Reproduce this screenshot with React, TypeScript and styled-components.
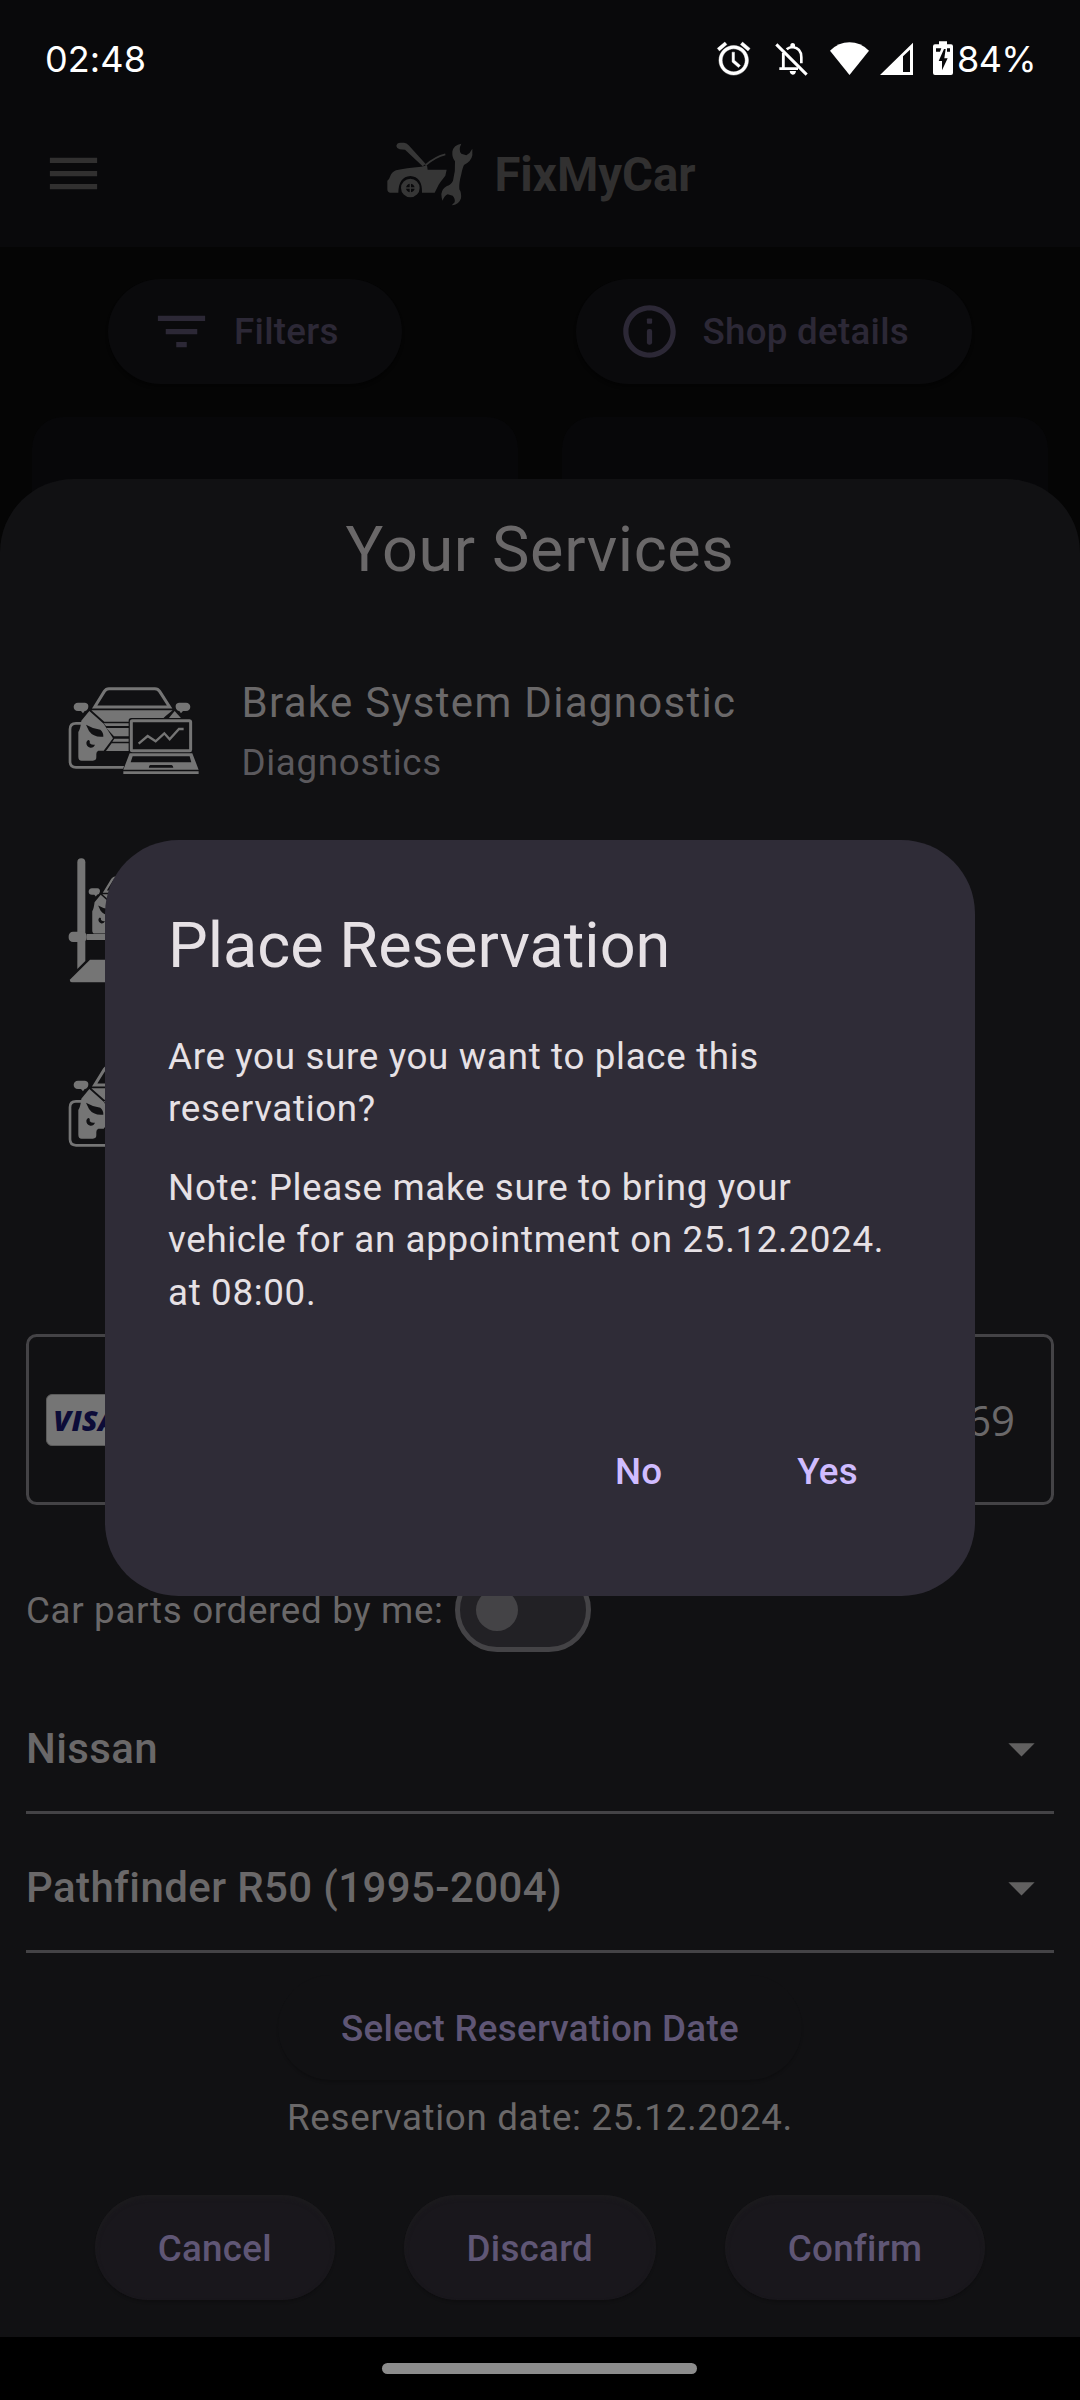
import React from "react";
import styled, { createGlobalStyle } from "styled-components";

const GlobalStyle = createGlobalStyle`
  html, body { margin: 0; padding: 0; background: #000; }
  * { box-sizing: border-box; }
`;

const c = {
  page: "#050505",
  bar: "#09090b",
  card: "#070709",
  chip: "#0a0a0c",
  dimText: "#313030",
  dimLogo: "#363636",
  dimPrimary: "#2c2836",
  sheet: "#111113",
  text: "#6a6869",
  subText: "#5b595d",
  icon: "#757575",
  line: "#444346",
  primary: "#5f5675",
  tonal: "#19171c",
  dialog: "#2f2c37",
  dialogText: "#e6e1e5",
  accent: "#d0bcff",
};

const Screen = styled.div`
  position: relative;
  width: 1080px;
  height: 2400px;
  overflow: hidden;
  display: flex;
  flex-direction: column;
  background: ${c.page};
  font-family: Roboto, "Liberation Sans", sans-serif;
`;

const StatusBar = styled.header`
  height: 106px;
  padding: 12px 45px 0 45px;
  display: flex;
  align-items: center;
  justify-content: space-between;
  background: ${c.bar};
  color: #fff;
  font: 400 36px/50px Inter, "Open Sans", sans-serif;
`;

const Clock = styled.span`
  letter-spacing: 0.1px;
`;

const StatusIcons = styled.div`
  display: flex;
  align-items: center;
  svg { display: block; }
`;

const Gap = styled.span<{ $w: number }>`
  width: ${(p) => p.$w}px;
`;

const Percent = styled.span`
  width: 78px;
  letter-spacing: -0.6px;
  white-space: nowrap;
`;

const AppBar = styled.div`
  height: 141px;
  display: grid;
  grid-template-columns: 105px 1fr 105px;
  align-items: center;
  padding: 0 0 6px;
  background: ${c.bar};
`;

const MenuButton = styled.div`
  padding-left: 42px;
  display: flex;
  svg { display: block; }
`;

const Brand = styled.div`
  display: flex;
  align-items: center;
  justify-content: center;
  gap: 21px;
  padding-left: 3px;
  color: ${c.dimText};
  font-size: 47.25px;
  font-weight: 700;
  line-height: 60px;
  svg { display: block; }
  span { padding-top: 2px; }
`;

const ChipRow = styled.div`
  display: flex;
  padding: 31.5px 108px 0 108px;
  justify-content: space-between;
`;

const Chip = styled.div`
  height: 105px;
  border-radius: 53px;
  display: flex;
  align-items: center;
  gap: 21px;
  padding: 0 63px 0 42px;
  background: ${c.chip};
  box-shadow: 0 3px 3px rgba(0, 0, 0, 0.4);
  color: ${c.dimPrimary};
  font-size: 36.75px;
  font-weight: 500;
  letter-spacing: 0.26px;
`;

const CardRow = styled.div`
  display: flex;
  gap: 44px;
  padding: 33px 32px 0;
`;

const Card = styled.div`
  flex: 1;
  height: 260px;
  border-radius: 31px;
  background: ${c.card};
`;

const Sheet = styled.section`
  position: absolute;
  left: 0;
  right: 0;
  top: 478.5px;
  height: 1858.5px;
  padding-top: 29px;
  display: flex;
  flex-direction: column;
  border-radius: 73.5px 73.5px 0 0;
  background: ${c.sheet};
  color: ${c.text};
`;

const SheetTitle = styled.h1`
  margin: 0 0 45px;
  text-align: center;
  font-size: 63px;
  font-weight: 400;
  line-height: 84px;
  letter-spacing: 0.62px;
`;

const ServiceRow = styled.div`
  height: 189px;
  padding-left: 66.5px;
  display: flex;
  align-items: center;
  gap: 41.7px;
  svg { display: block; flex: none; }
`;

const ServiceText = styled.div`
  display: flex;
  flex-direction: column;
  gap: 3px;
  padding-bottom: 2px;
`;

const ServiceName = styled.div`
  font-size: 42px;
  line-height: 63px;
  letter-spacing: 1.31px;
`;

const ServiceKind = styled.div`
  font-size: 36.75px;
  line-height: 52.5px;
  letter-spacing: 0.66px;
  color: ${c.subText};
`;

const CardField = styled.div`
  margin: 130.5px 26px 0;
  height: 171px;
  border: 3px solid ${c.line};
  border-radius: 10.5px;
  display: flex;
  align-items: center;
  justify-content: space-between;
  padding: 0 36px 0 17px;
  font: 400 42px/60px "Open Sans", "Noto Sans", sans-serif;
`;

const VisaBadge = styled.div`
  width: 79px;
  height: 52px;
  border-radius: 6px;
  border: 1px solid #5a5a5a;
  background: ${c.icon};
  color: #0c0c38;
  display: flex;
  align-items: center;
  justify-content: center;
  font: italic 800 29px/30px "Open Sans", sans-serif;
  letter-spacing: 0.2px;
`;

const SwitchRow = styled.div`
  margin: 63px 26px 0;
  height: 84px;
  display: flex;
  align-items: center;
  gap: 11px;
  font-size: 36.75px;
  letter-spacing: 0.66px;
  white-space: nowrap;
`;

const Track = styled.div`
  width: 136.5px;
  height: 84px;
  border: 5.25px solid ${c.line};
  border-radius: 42px;
  background: #222125;
  display: flex;
  align-items: center;
  padding-left: 16px;
`;

const Thumb = styled.div`
  width: 42px;
  height: 42px;
  border-radius: 50%;
  background: ${c.line};
`;

const Dropdown = styled.div<{ $top: number }>`
  margin: ${(p) => p.$top}px 26px 0;
  height: 97px;
  padding: 0 1px 31px 0;
  border-bottom: 3px solid ${c.line};
  display: flex;
  align-items: center;
  justify-content: space-between;
  font-size: 42px;
  font-weight: 500;
  letter-spacing: 0.39px;
  line-height: 60px;
  svg { display: block; }
`;

const PickDate = styled.div`
  align-self: center;
  margin-top: 22px;
  height: 105px;
  padding: 2px 63px 0;
  border-radius: 53px;
  display: flex;
  align-items: center;
  background: ${c.sheet};
  box-shadow: 0 3px 3px -1px rgba(0, 0, 0, 0.2);
  color: ${c.primary};
  font-size: 36.75px;
  font-weight: 500;
  letter-spacing: 0.26px;
`;

const DateLine = styled.div`
  margin-top: 12px;
  text-align: center;
  font-size: 36.75px;
  line-height: 52.5px;
  letter-spacing: 0.66px;
`;

const ButtonRow = styled.div`
  margin: 50px 26px 0;
  display: flex;
  justify-content: space-evenly;
`;

const TonalButton = styled.div`
  height: 105px;
  padding: 2px 63px 0;
  border-radius: 53px;
  display: flex;
  align-items: center;
  background: ${c.tonal};
  box-shadow: 0 3px 3px -1px rgba(0, 0, 0, 0.2), inset 0 3px 4px rgba(30, 30, 30, 0.6);
  color: ${c.primary};
  font-size: 36.75px;
  font-weight: 500;
  letter-spacing: 0.26px;
`;

const NavBar = styled.footer`
  margin-top: auto;
  height: 63px;
  display: flex;
  justify-content: center;
  align-items: center;
  background: #000;
  padding-right: 1px;
`;

const HomeHandle = styled.div`
  width: 315px;
  height: 11px;
  border-radius: 6px;
  background: #8c8c8c;
`;

const Dialog = styled.div`
  position: absolute;
  left: 105px;
  top: 840.3px;
  width: 870px;
  height: 756px;
  padding: 63.7px 63px 72px;
  border-radius: 73.5px;
  background: ${c.dialog};
  color: ${c.dialogText};
  display: flex;
  flex-direction: column;
`;

const DialogTitle = styled.h2`
  margin: 0 0 42.7px;
  font-size: 63px;
  font-weight: 400;
  line-height: 84px;
`;

const DialogText = styled.p`
  margin: 0 0 26.25px;
  font-size: 36.75px;
  line-height: 52.5px;
  letter-spacing: 0.66px;
`;

const DialogActions = styled.div`
  margin-top: auto;
  display: flex;
  justify-content: flex-end;
  gap: 27px;
`;

const TextButton = styled.div`
  height: 105px;
  padding: 0 54px;
  display: flex;
  align-items: center;
  color: ${c.accent};
  font-size: 36.75px;
  font-weight: 500;
  letter-spacing: 0.26px;
`;

const AlarmIcon = () => (
  <svg width="39.4" height="39.4" viewBox="0 0 24 24" fill="#fff" stroke="#fff" strokeWidth=".25">
    <path d="M22 5.72l-4.6-3.86-1.29 1.53 4.6 3.86L22 5.72zM7.88 3.39L6.6 1.86 2 5.71l1.29 1.53 4.59-3.85zM12.5 8H11v6l3.9 3.4 1.2-1.3-3.6-3.1V8zM12 4c-4.97 0-9 4.03-9 9s4.02 9 9 9c4.97 0 9-4.03 9-9s-4.03-9-9-9zm0 16c-3.87 0-7-3.13-7-7s3.13-7 7-7 7 3.13 7 7-3.13 7-7 7z" />
  </svg>
);

const BellOffIcon = () => (
  <svg width="34" height="34" viewBox="284 66 102 102" fill="none" stroke="#fff">
    <path d="M288 73L379 164" strokeWidth="9" />
    <path d="M309 99V145M297 146H353" strokeWidth="8.500" />
    <path d="M319 88Q327 81 337 81Q363 84 363 112V130" strokeWidth="8" />
    <path d="M330 82V74Q331 69 337 69Q343 69 344 74V82Z" fill="#fff" stroke="none" />
    <path d="M328 153H347Q346 164 337 164Q329 163 328 153Z" fill="#fff" stroke="none" />
  </svg>
);

const WifiIcon = () => (
  <svg width="39" height="35" viewBox="450 62 117 105" fill="#fff">
    <path d="M450 88Q476 63 508.500 63Q541 63 567 88L508.500 161Z" />
  </svg>
);

const SignalIcon = () => (
  <svg width="33" height="35" viewBox="600 63 99 105" fill="#fff">
    <path fillRule="evenodd" d="M600 162L699 65V162ZM669 106V153H690V86Z" />
  </svg>
);

const BatteryIcon = () => (
  <svg width="20" height="36" viewBox="759 62 60 108">
    <path fill="#fff" d="M777 63H801V72H813Q819 72 819 78V158Q819 164 813 164H765Q759 164 759 158V78Q759 72 765 72H777Z" />
    <path fill="#09090b" d="M792 86L776 122H786V150L803 114H793L797 86ZM768 84H784L780 94H768ZM801 84H810V94H801Z" />
  </svg>
);

const LogoMark = () => (
  <svg width="86" height="64" viewBox="83 64 258 192" fill={c.dimLogo}>
    <path d="M111 76Q112 66 124 66H134Q142 67 148 74L199 130L190 137L137 87L121 86Q112 84 111 76Z" />
    <path d="M198 134Q228 108 258 101" fill="none" stroke={c.dimLogo} strokeWidth="5" />
    <path d="M84 180Q90 176 92 168Q98 153 110 149Q140 142 186 138L203 134L205 147H262L258 165L244 183L238 192L226 216H188Q189 168 153 166Q118 168 117 216H92Q84 215 84 206Z" />
    <circle cx="153" cy="202" r="20.500" fill="none" stroke={c.dimLogo} strokeWidth="15" />
    <path d="M153 186V218M137 202H169" stroke={c.dimLogo} strokeWidth="4" />
    <path d="M306 69Q283 72 279 93Q278 111 287 122Q289 150 281 180Q276 192 263 196Q248 204 246 220Q246 232 250 240Q254 226 265 221L280 225Q288 233 286 245L277 254Q299 253 305 233Q307 216 300 206Q298 190 306 160Q310 140 314 133Q336 122 339 104L339 84Q333 97 321 104L306 99Q296 88 306 69Z" />
  </svg>
);

const CarFront = () => (
  <g fill={c.icon}>
    <path d="M163 141L192 94Q197 86 206 86H344Q353 86 358 94L388 141Z" fill="none" stroke={c.icon} strokeWidth="9" />
    <path d="M113 128H134Q145 129 144 141Q142 152 133 153L128 160L122 153H113Q100 152 100 140Q101 129 113 128Z" />
    <path d="M437 128H416Q405 129 406 141Q408 152 417 153L422 160L428 153H437Q450 152 450 140Q449 129 437 128Z" />
    <path d="M153 151H397L376 168L358 185H192Z" />
    <path d="M147 153L190 191L218 235L190 272H174Q168 274 168 282V292Q168 302 158 302H124Q114 302 114 290V216Q120 208 123 182Z" />
    <path d="M403 153L424 176H384Z" />
    <path d="M190 190H357V198H197ZM198 204H350V229H221ZM222 236H340V245H216ZM214 250H340V273H197Z" />
    <path fill={c.sheet} d="M137 194Q157 206 180 209Q190 218 189 230Q160 233 146 213ZM144 240Q150 241 148 250Q156 256 164 254Q160 264 150 263Q138 260 138 248Q139 242 144 240Z" />
  </g>
);

const DiagnosticsIcon = () => (
  <svg width="133.3" height="92" viewBox="80 75 400 276">
    <path d="M128 190H107Q89 190 89 208V304Q89 322 107 322H252" fill="none" stroke={c.icon} strokeWidth="8" />
    <CarFront />
    <rect x="265" y="174" width="194" height="104" rx="8" fill={c.sheet} />
    <path d="M264 276H460L482 345H243Z" fill={c.sheet} />
    <rect x="273" y="182" width="178" height="90" rx="3" fill={c.sheet} stroke={c.icon} strokeWidth="9" />
    <path d="M295 251L322 228L346 244L372 220L388 238L416 207H430" fill="none" stroke={c.icon} strokeWidth="7" />
    <path fill={c.icon} fillRule="evenodd" d="M268 280H456L475 329H249ZM277 289L271 307H453L448 289ZM330 315Q325 317 326 323H399Q399 317 394 315Z" />
    <path fill={c.icon} d="M249 334H475V342H249Z" />
  </svg>
);

const LiftIcon = () => (
  <svg width="133.3" height="126.700" viewBox="80 79 400 380" fill={c.icon}>
    <path d="M111 415V95Q111 83 123 83Q135 83 135 95V391Z" />
    <path d="M449 415V95Q449 83 437 83Q425 83 425 95V391Z" />
    <rect x="85" y="303" width="54" height="31" rx="13" />
    <rect x="421" y="303" width="54" height="31" rx="13" />
    <rect x="139" y="310" width="282" height="18" />
    <path d="M149 387H411L472 446Q474 455 466 455H94Q86 453 90 446Z" />
    <g transform="translate(68 73) scale(.77 .78)">
      <CarFront />
    </g>
  </svg>
);

const ArrowDown = () => (
  <svg width="63" height="63" viewBox="0 0 24 24" fill="#616060">
    <path d="M7 10l5 5 5-5z" />
  </svg>
);

export default function App() {
  return (
    <Screen>
      <GlobalStyle />
      <StatusBar>
        <Clock>02:48</Clock>
        <StatusIcons>
          <AlarmIcon />
          <Gap $w={22} />
          <BellOffIcon />
          <Gap $w={21} />
          <WifiIcon />
          <Gap $w={11} />
          <SignalIcon />
          <Gap $w={20} />
          <BatteryIcon />
          <Gap $w={4} />
          <Percent>84%</Percent>
        </StatusIcons>
      </StatusBar>
      <AppBar>
        <MenuButton>
          <svg width="63" height="63" viewBox="0 0 24 24" fill={c.dimText}>
            <path d="M3 18h18v-2H3v2zm0-5h18v-2H3v2zm0-7v2h18V6H3z" />
          </svg>
        </MenuButton>
        <Brand>
          <LogoMark />
          <span>FixMyCar</span>
        </Brand>
      </AppBar>
      <ChipRow>
        <Chip>
          <svg width="63" height="63" viewBox="0 0 24 24" fill={c.dimPrimary}>
            <path d="M10 18h4v-2h-4v2zM3 6v2h18V6H3zm3 7h12v-2H6v2z" />
          </svg>
          Filters
        </Chip>
        <Chip>
          <svg width="63" height="63" viewBox="0 0 24 24" fill={c.dimPrimary}>
            <path d="M12 2C6.480 2 2 6.480 2 12s4.480 10 10 10 10-4.480 10-10S17.520 2 12 2zm0 18c-4.410 0-8-3.590-8-8s3.590-8 8-8 8 3.590 8 8-3.590 8-8 8z" />
            <rect x="11" y="7" width="2" height="2" rx=".3" />
            <rect x="11" y="11" width="2" height="6" rx=".8" />
          </svg>
          Shop details
        </Chip>
      </ChipRow>
      <CardRow>
        <Card />
        <Card />
      </CardRow>
      <NavBar>
        <HomeHandle />
      </NavBar>

      <Sheet>
        <SheetTitle>Your Services</SheetTitle>
        <ServiceRow>
          <DiagnosticsIcon />
          <ServiceText>
            <ServiceName>Brake System Diagnostic</ServiceName>
            <ServiceKind>Diagnostics</ServiceKind>
          </ServiceText>
        </ServiceRow>
        <ServiceRow>
          <LiftIcon />
        </ServiceRow>
        <ServiceRow>
          <DiagnosticsIcon />
        </ServiceRow>
        <CardField>
          <VisaBadge>VISA</VisaBadge>
          <span>69</span>
        </CardField>
        <SwitchRow>
          <span>Car parts ordered by me:</span>
          <Track>
            <Thumb />
          </Track>
        </SwitchRow>
        <Dropdown $top={65}>
          <span>Nissan</span>
          <ArrowDown />
        </Dropdown>
        <Dropdown $top={42}>
          <span>Pathfinder R50 (1995-2004)</span>
          <ArrowDown />
        </Dropdown>
        <PickDate>Select Reservation Date</PickDate>
        <DateLine>Reservation date: 25.12.2024.</DateLine>
        <ButtonRow>
          <TonalButton>Cancel</TonalButton>
          <TonalButton>Discard</TonalButton>
          <TonalButton>Confirm</TonalButton>
        </ButtonRow>
      </Sheet>

      <Dialog>
        <DialogTitle>Place Reservation</DialogTitle>
        <DialogText>Are you sure you want to place this reservation?</DialogText>
        <DialogText>
          Note: Please make sure to bring your vehicle for an appointment on 25.12.2024. at 08:00.
        </DialogText>
        <DialogActions>
          <TextButton>No</TextButton>
          <TextButton>Yes</TextButton>
        </DialogActions>
      </Dialog>
    </Screen>
  );
}
